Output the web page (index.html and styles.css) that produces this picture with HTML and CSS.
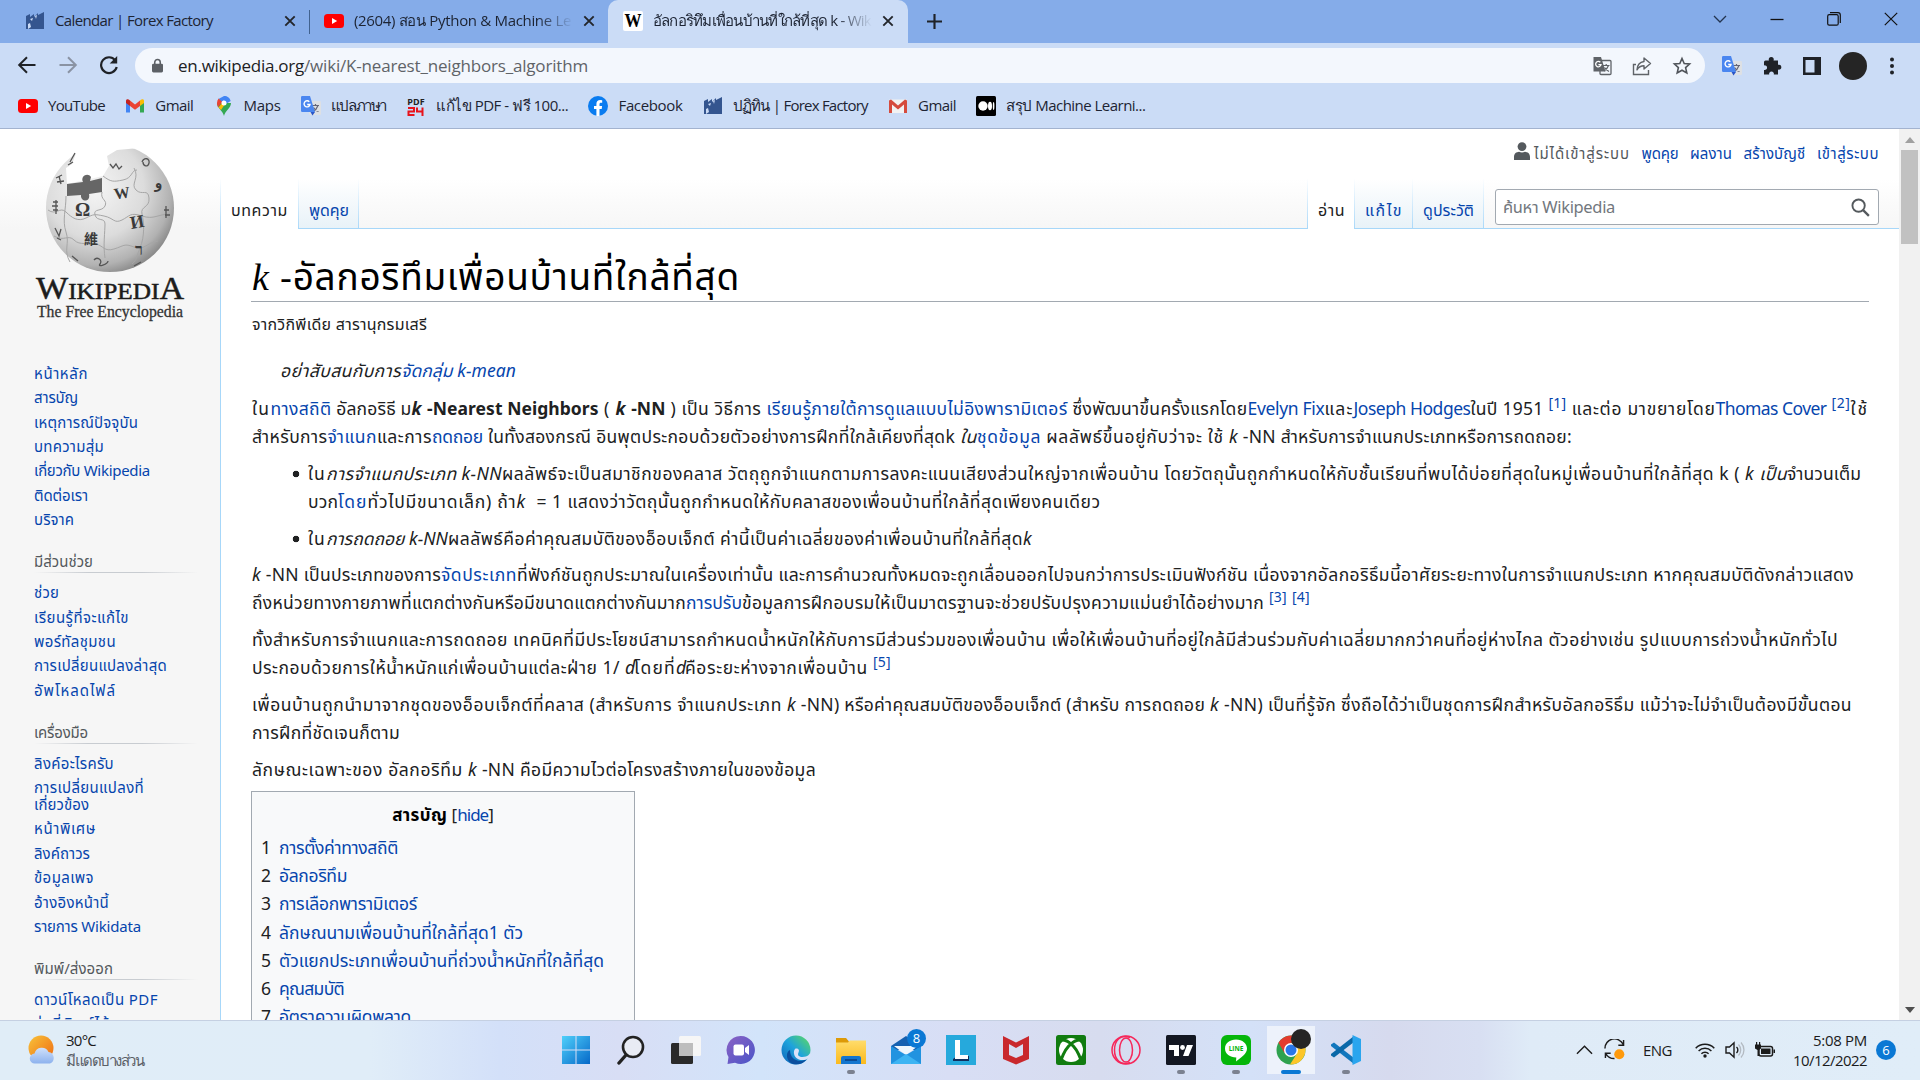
FILE: index.html
```html
<!DOCTYPE html>
<html lang="th">
<head>
<meta charset="utf-8">
<title>อัลกอริทึมเพื่อนบ้านที่ใกล้ที่สุด k - Wikipedia</title>
<link rel="stylesheet" href="styles.css">
</head>
<body>
<svg class="defs" aria-hidden="true">
  <defs>
    <linearGradient id="gWin" x1="0" y1="0" x2="1" y2="1"><stop offset="0" stop-color="#4fd0fb"/><stop offset="1" stop-color="#0668c8"/></linearGradient>
    <linearGradient id="gChat" x1="0" y1="0" x2="1" y2="1"><stop offset="0" stop-color="#8b62c4"/><stop offset="1" stop-color="#4a55c8"/></linearGradient>
    <linearGradient id="gEdge" x1="0" y1="1" x2="1" y2="0"><stop offset="0" stop-color="#0f62b8"/><stop offset=".5" stop-color="#1ea3dc"/><stop offset="1" stop-color="#60dd58"/></linearGradient>
    <linearGradient id="gFold" x1="0" y1="0" x2="0" y2="1"><stop offset="0" stop-color="#ffdc6b"/><stop offset="1" stop-color="#fbb91c"/></linearGradient>
    <linearGradient id="gSun" x1="0" y1="0" x2="1" y2="1"><stop offset="0" stop-color="#f8c33a"/><stop offset="1" stop-color="#ee6a12"/></linearGradient>
    <linearGradient id="gCloud" x1="0" y1="0" x2="0" y2="1"><stop offset="0" stop-color="#cfe0fa"/><stop offset="1" stop-color="#8db2ee"/></linearGradient>
    <radialGradient id="gGlobe" cx=".38" cy=".35" r=".7"><stop offset="0" stop-color="#f5f5f5"/><stop offset=".55" stop-color="#dcdcdc"/><stop offset=".85" stop-color="#b2b2b2"/><stop offset="1" stop-color="#858585"/></radialGradient>
  </defs>
  <symbol id="i-forex" viewBox="0 0 20 20"><path fill="#34558f" d="M1 5l4-2v3l4-3v3l4-4v2l6-3v17H1z"/><path fill="#cbdbf5" d="M5 8l3-1-1 3zM3 13l2-1 1 4-3 2zM10 5l2-1-1 4z"/></symbol>
  <symbol id="i-yt" viewBox="0 0 20 20"><rect x="0" y="3" width="20" height="14" rx="3.5" fill="#f00"/><path fill="#fff" d="M8 7l5.200 3L8 13z"/></symbol>
  <symbol id="i-gmail" viewBox="0 0 20 20"><path fill="#4285f4" d="M1 5v11.500h4V8z"/><path fill="#34a853" d="M15 8v8.500h4V5z"/><path fill="#ea4335" d="M5 4.500l5 4 5-4V10l-5 3.800L5 10z"/><path fill="#c5221f" d="M1 5c0-2 2-2.500 4-.5V10L1 7z"/><path fill="#fbbc04" d="M19 5c0-2-2-2.500-4-.5V10l4-3z"/></symbol>
  <symbol id="i-gmailold" viewBox="0 0 20 20"><rect x="1" y="3.500" width="18" height="13.500" rx="1" fill="#f2f2f2"/><path fill="#d54b3d" d="M1 4.500l2-1 7 6 7-6 2 1V17h-3V8.500l-6 5-6-5V17H1z"/></symbol>
  <symbol id="i-maps" viewBox="0 0 20 20"><path fill="#34a853" d="M10 20C9 15 3 12 3 7h14c0 5-6 8-7 13z"/><path fill="#4285f4" d="M10 0a7 7 0 0 1 6.700 5L10 9z"/><path fill="#fbbc04" d="M4.500 11.500L8 7l3 1-4 6z"/><path fill="#4285f4" d="M10 0a7 7 0 0 1 2.500.5L8 7 4.500 3z"/><path fill="#ea4335" d="M4.600 2.600L8.300 6 4 11.200C2.600 8.500 2.600 5 4.600 2.600z"/><circle cx="10" cy="7" r="2.500" fill="#fff"/></symbol>
  <symbol id="i-gt" viewBox="0 0 20 20"><rect x="8" y="5" width="12" height="14" rx="1.200" fill="#dde0e4"/><path d="M11 9.500h7M14.500 8v1.500M17 9.500c-1 3-3 5-5 6M12.500 11.500c1 2 3 3.500 5 4" stroke="#667" stroke-width="1.200" fill="none"/><path fill="#4a86f0" d="M1.200 0H9l5 16H1.200A1.200 1.200 0 0 1 0 14.800V1.200A1.200 1.200 0 0 1 1.200 0z"/><path fill="#2a56c8" d="M9.500 16H14l-2.500 3.500z"/><path d="M8.300 5.800A3 3 0 1 0 9 8.500H6.200" stroke="#fff" stroke-width="1.400" fill="none"/></symbol>
  <symbol id="i-gtgray" viewBox="0 0 20 20"><rect x="8" y="4.500" width="11" height="14" rx="1" fill="none" stroke="#5f6368" stroke-width="1.300"/><path d="M11 9.500h6.500M14.200 8v1.500M16.500 9.500c-1 3-2.500 4-4.500 5.500M12.500 11.500c1 2 2.500 3 4.500 4" stroke="#5f6368" stroke-width="1.200" fill="none"/><path fill="#5f6368" d="M1.500 1H9l4.500 14.500h-12z"/><path d="M8.300 6.200A2.700 2.700 0 1 0 9 8.700H6.400" stroke="#fff" stroke-width="1.300" fill="none"/></symbol>
  <symbol id="i-fb" viewBox="0 0 20 20"><circle cx="10" cy="10" r="10" fill="#0a7cf0"/><path fill="#fff" d="M8.400 20v-7H6v-3h2.400V8c0-2.600 1.500-4 3.800-4l2 .2v2.500h-1.200c-1.200 0-1.500.7-1.500 1.500V10h2.600l-.4 3h-2.200v7z"/></symbol>
  <symbol id="i-medium" viewBox="0 0 20 20"><rect width="20" height="20" rx="1.500"/><circle cx="7" cy="10" r="4.700" fill="#fff"/><ellipse cx="14" cy="10" rx="2" ry="4.300" fill="#fff"/><ellipse cx="17.600" cy="10" rx=".8" ry="4" fill="#fff"/></symbol>
  <symbol id="i-x" viewBox="0 0 12 12"><path d="M1.300 1.300l9.400 9.400M10.700 1.300L1.300 10.700" stroke="#23262b" stroke-width="1.900" fill="none"/></symbol>
</svg>

<div class="browser">
  <header class="tabstrip">
    <div class="tab t1"><svg class="fav"><use href="#i-forex"/></svg><div class="tabtext"><span data-w="158">Calendar | Forex Factory</span></div><svg class="close"><use href="#i-x"/></svg></div>
    <div class="tab t2"><svg class="fav"><use href="#i-yt"/></svg><div class="tabtext fade"><span data-w="217">(2604) สอน Python &amp; Machine Le</span></div><svg class="close"><use href="#i-x"/></svg></div>
    <div class="tab t3"><svg class="fav" viewBox="0 0 20 20"><rect width="20" height="20" rx="2" fill="#fff"/><text x="10" y="16" text-anchor="middle" textLength="17" lengthAdjust="spacingAndGlyphs" class="wglyph">W</text></svg><div class="tabtext fade"><span data-w="218">อัลกอริทึมเพื่อนบ้านที่ใกล้ที่สุด k - Wik</span></div><svg class="close"><use href="#i-x"/></svg></div>
    <svg class="plus" viewBox="0 0 14 14"><path d="M7 0v14M0 7h14" stroke="#1e2228" stroke-width="2"/></svg>
    <div class="winctl">
      <svg viewBox="0 0 14 14"><path d="M1 4l6 6 6-6" stroke="#23344f" fill="none" stroke-width="1.300"/></svg>
      <svg viewBox="0 0 14 14"><path d="M.5 7.500h13" stroke="#111" stroke-width="1.300"/></svg>
      <svg viewBox="0 0 14 14"><rect x=".7" y="2.700" width="10.500" height="10.500" rx="1.500" fill="none" stroke="#111" stroke-width="1.200"/><path d="M3 .7h8a2.300 2.300 0 0 1 2.300 2.300v8" fill="none" stroke="#111" stroke-width="1.200"/></svg>
      <svg viewBox="0 0 14 14"><path d="M.8.800l12.400 12.400M13.200.8L.8 13.200" stroke="#111" stroke-width="1.200"/></svg>
    </div>
  </header>

  <div class="toolbar">
    <div class="nav">
      <svg viewBox="0 0 20 20"><path d="M18.500 10H2.500M10 2.200L2.200 10l7.800 7.800" stroke="#1f2227" stroke-width="2" fill="none"/></svg>
      <svg viewBox="0 0 20 20"><path d="M1.500 10h16M10 2.200l7.800 7.800-7.800 7.800" stroke="#8a93a3" stroke-width="2" fill="none"/></svg>
      <svg viewBox="0 0 20 20"><path d="M16.200 5.200A7.900 7.900 0 1 0 17.700 12" stroke="#1f2227" stroke-width="2.200" fill="none"/><path d="M18.200 1v7.500h-7.500z" fill="#1f2227"/></svg>
    </div>
    <div class="omnibox">
      <svg class="lock" viewBox="0 0 12 16"><path d="M3 7V4.500a3 3 0 0 1 6 0V7" stroke="#5c6066" stroke-width="1.700" fill="none"/><rect y="6" width="12" height="9.500" rx="1.500" fill="#5c6066"/></svg>
      <div class="url"><span data-w="126" class="host">en.wikipedia.org</span><span data-w="284">/wiki/K-nearest_neighbors_algorithm</span></div>
      <div class="omniicons">
        <svg><use href="#i-gtgray"/></svg>
        <svg viewBox="0 0 20 20"><path d="M4 8.500H1.500v10h15V14" stroke="#5f6368" stroke-width="1.400" fill="none"/><path d="M12 2l6.500 5.500L12 13v-3.200c-3.500 0-5.500 1.500-7 4 .3-4.500 3-7.800 7-8.300z" stroke="#5f6368" stroke-width="1.400" fill="none" stroke-linejoin="round"/></svg>
        <svg viewBox="0 0 20 20"><path d="M10 2.500l2.200 5 5.400.5-4 3.600 1.200 5.400L10 14.200 5.200 17l1.200-5.400-4-3.600 5.400-.5z" stroke="#50545a" stroke-width="1.600" fill="none"/></svg>
      </div>
    </div>
    <div class="ext">
      <svg><use href="#i-gt"/></svg>
      <svg viewBox="0 0 20 20"><path fill="#1f2227" d="M3.500 4.500H7a2.500 2.500 0 1 1 4.500 0H16v4.300a2.500 2.500 0 1 1 0 4.700V18.500h-4.200a2.400 2.400 0 1 0-4.600 0H2V14a2.400 2.400 0 1 0 0-4.600V6a1.500 1.500 0 0 1 1.500-1.500z"/></svg>
      <svg viewBox="0 0 20 20"><path fill="#1f2227" fill-rule="evenodd" d="M1 1h18v18H1zM3.500 4v12.500h9V4z"/></svg>
      <div class="avatar"></div>
      <svg viewBox="0 0 20 20"><g fill="#1f2227"><circle cx="10" cy="3.500" r="2"/><circle cx="10" cy="10" r="2"/><circle cx="10" cy="16.500" r="2"/></g></svg>
    </div>
  </div>

  <nav class="bookmarks">
    <div class="bm"><svg><use href="#i-yt"/></svg><span data-w="57">YouTube</span></div>
    <div class="bm"><svg><use href="#i-gmail"/></svg><span data-w="38">Gmail</span></div>
    <div class="bm"><svg><use href="#i-maps"/></svg><span data-w="37">Maps</span></div>
    <div class="bm"><svg><use href="#i-gt"/></svg><span data-w="55">แปลภาษา</span></div>
    <div class="bm"><svg viewBox="0 0 20 20"><text x="10" y="9" text-anchor="middle" class="pdf">PDF</text><path d="M2 12h6v3.500H2.500V19H8.500M11 11.500v4h6M16.500 11.500V20" stroke="#e8131b" stroke-width="2" fill="none"/></svg><span data-w="132">แก้ไข PDF - ฟรี 100...</span></div>
    <div class="bm"><svg><use href="#i-fb"/></svg><span data-w="64">Facebook</span></div>
    <div class="bm"><svg><use href="#i-forex"/></svg><span data-w="135">ปฏิทิน | Forex Factory</span></div>
    <div class="bm"><svg><use href="#i-gmailold"/></svg><span data-w="38">Gmail</span></div>
    <div class="bm"><svg><use href="#i-medium"/></svg><span data-w="139">สรุป Machine Learni...</span></div>
  </nav>
</div>

<div class="page">
  <aside class="sidebar">
    <svg class="logo" viewBox="0 0 160 180">
      <defs><clipPath id="cg"><path d="M0 0h48L42 16l-6 4 1 16 36-8 6-10-2-10 10-6 22-2 6-4h20l30 20v130H0z"/></clipPath></defs>
      <g clip-path="url(#cg)"><circle cx="80" cy="60" r="64" fill="url(#gGlobe)"/></g>
      <path fill="#666" d="M37 36l16-2c-3-6 5-10 8-5l-1 4 12-3v14l-13 2c2 9-9 8-8 1l-14 1z"/>
      <g fill="none" stroke="#a6a6a6" stroke-width="1">
        <path d="M36 48c0 14-4 24 0 36s-3 18 4 30M72 44c-2 8 6 8 3 14s-12 2-10 9 10 2 10 9-2 22 0 34M104 20c6 10-4 16 2 22s12-2 13 8-9 8-7 16 3 22-2 34-2 10-8 16M18 62c8 6 12-4 18 2s12 10 20 6 8-4 18-2 10 8 18 4 8-8 20-4 16-2 28-2M24 88c10 6 14-2 20 4s14 2 22 4 8 8 18 5 10-6 20-2 12-4 24-6M73 28c8 6 10 6 20 4s8-10 14-10"/>
      </g>
      <g class="gl">
        <text x="45" y="68" font-size="19">Ω</text><text x="84" y="51" font-size="16" transform="rotate(-8 88 46)">W</text>
        <text x="100" y="80" font-size="18" transform="rotate(-10 106 74)">И</text><text x="54" y="96" font-size="14">維</text>
        <text x="105" y="107" font-size="16">ר</text><text x="125" y="40" font-size="15">و</text>
      </g>
      <g fill="none" stroke="#555" stroke-width="1.300">
        <path d="M80 16l3 4 3-4 3 5 3-3M112 14c2-5 8-4 7 1s-6 3-6-1M26 30l6-3M27 34l7-1M29 28l2 8M23 54h5M22 58h6M23 62h5M26 52v14M25 80l4 8 2-7M27 90l4 2M42 108l6 5M64 112c3-4 9 0 6 4s8 0 8-3M104 118l7-4M136 58v12M134 62h5M135 67h5M40 14l5-9M38 17l5-3"/>
      </g>
      <text x="6" y="151" class="wm" textLength="148" lengthAdjust="spacingAndGlyphs"><tspan font-size="31">W</tspan><tspan font-size="23">IKIPEDI</tspan><tspan font-size="31">A</tspan></text>
      <text x="7" y="169" class="tag" textLength="146" lengthAdjust="spacingAndGlyphs">The Free Encyclopedia</text>
    </svg>
    <ul>
      <li><a data-w="54">หน้าหลัก</a></li><li><a data-w="44">สารบัญ</a></li><li><a data-w="104">เหตุการณ์ปัจจุบัน</a></li><li><a data-w="70">บทความสุ่ม</a></li><li><a data-w="116">เกี่ยวกับ Wikipedia</a></li><li><a data-w="54">ติดต่อเรา</a></li><li><a data-w="40">บริจาค</a></li>
    </ul>
    <h3><span data-w="59">มีส่วนช่วย</span></h3>
    <ul>
      <li><a data-w="25">ช่วย</a></li><li><a data-w="95">เรียนรู้ที่จะแก้ไข</a></li><li><a data-w="82">พอร์ทัลชุมชน</a></li><li><a data-w="133">การเปลี่ยนแปลงล่าสุด</a></li><li><a data-w="82">อัพโหลดไฟล์</a></li>
    </ul>
    <h3><span data-w="54">เครื่องมือ</span></h3>
    <ul>
      <li><a data-w="80">ลิงค์อะไรครับ</a></li><li><a data-w="110">การเปลี่ยนแปลงที่</a><br><a data-w="55">เกี่ยวข้อง</a></li><li><a data-w="62">หน้าพิเศษ</a></li><li><a data-w="56">ลิงค์ถาวร</a></li><li><a data-w="60">ข้อมูลเพจ</a></li><li><a data-w="75">อ้างอิงหน้านี้</a></li><li><a data-w="107">รายการ Wikidata</a></li>
    </ul>
    <h3><span data-w="79">พิมพ์/ส่งออก</span></h3>
    <ul>
      <li><a data-w="124">ดาวน์โหลดเป็น PDF</a></li><li><a data-w="76">รุ่นที่พิมพ์ได้</a></li>
    </ul>
  </aside>

  <div class="main">
    <div class="personal">
      <svg viewBox="0 0 16 18"><circle cx="8" cy="4.600" r="4.400" fill="#54595d"/><path d="M0 18v-3c0-3.500 2.500-5 5-5.200 2 1 4 1 6 0 2.500.2 5 1.700 5 5.200v3z" fill="#54595d"/></svg>
      <span class="anon" data-w="96">ไม่ได้เข้าสู่ระบบ</span><a data-w="37">พูดคุย</a><a data-w="42">ผลงาน</a><a data-w="62">สร้างบัญชี</a><a data-w="62">เข้าสู่ระบบ</a>
    </div>
    <div class="tabs">
      <div class="vt on first"><span data-w="57">บทความ</span></div><div class="vt"><a data-w="40">พูดคุย</a></div>
      <div class="sp"></div>
      <div class="vt on read"><span data-w="27">อ่าน</span></div><div class="vt"><a data-w="38">แก้ไข</a></div><div class="vt"><a data-w="51">ดูประวัติ</a></div>
      <div class="searchwrap"><div class="search"><span data-w="112">ค้นหา Wikipedia</span><svg viewBox="0 0 20 20"><circle cx="8" cy="8" r="6.500" fill="none" stroke="#54595d" stroke-width="2"/><path d="M12.800 12.800l6 6" stroke="#54595d" stroke-width="2.400"/></svg></div></div>
    </div>
    <article class="content">
      <h1><i data-w="28">k </i><span data-w="460">-อัลกอริทึมเพื่อนบ้านที่ใกล้ที่สุด</span></h1>
      <div class="sub"><span data-w="175">จากวิกิพีเดีย สารานุกรมเสรี</span></div>
      <div class="p hat"><i data-w="121">อย่าสับสนกับการ</i><a data-w="115"><i>จัดกลุ่ม k-mean</i></a></div>
      <div class="p">
        <div class="ln"><span data-w="18.500">ใน</span><a data-w="61">ทางสถิติ</a><span data-w="80"> อัลกอริธี ม</span><b data-w="11"><i>k</i></b><b data-w="176"> -Nearest Neighbors</b><span data-w="17"> ( </span><b data-w="11"><i>k</i></b><b data-w="39"> -NN</b><span data-w="101"> ) เป็น วิธีการ </span><a data-w="301">เรียนรู้ภายใต้การดูแลแบบไม่อิงพารามิเตอร์</a><span data-w="180"> ซึ่งพัฒนาขึ้นครั้งแรกโดย</span><a data-w="77">Evelyn Fix</a><span data-w="29">และ</span><a data-w="117">Joseph Hodges</a><span data-w="78">ในปี 1951 </span><sup><a data-w="18">[1]</a></sup><span data-w="149"> และต่อ มาขยายโดย</span><a data-w="111">Thomas Cover</a><span data-w="5"> </span><sup><a data-w="19">[2]</a></sup><span data-w="19">ใช้</span></div>
        <div class="ln"><span data-w="75.500">สำหรับการ</span><a data-w="49.500">จำแนก</a><span data-w="55">และการ</span><a data-w="51">ถดถอย</a><span data-w="477"> ในทั้งสองกรณี อินพุตประกอบด้วยตัวอย่างการฝึกที่ใกล้เคียงที่สุดk </span><i data-w="17">ใน</i><a data-w="64">ชุดข้อมูล</a><span data-w="188"> ผลลัพธ์ขึ้นอยู่กับว่าจะ ใช้ </span><i data-w="9">k</i><span data-w="334"> -NN สำหรับการจำแนกประเภทหรือการถดถอย:</span></div>
      </div>
      <div class="p bl">
        <div class="ln"><span data-w="18">ใน</span><i data-w="176">การจำแนกประเภท k-NN</i><span data-w="1243">ผลลัพธ์จะเป็นสมาชิกของคลาส วัตถุถูกจำแนกตามการลงคะแนนเสียงส่วนใหญ่จากเพื่อนบ้าน โดยวัตถุนั้นถูกกำหนดให้กับชั้นเรียนที่พบได้บ่อยที่สุดในหมู่เพื่อนบ้านที่ใกล้ที่สุด k ( </span><i data-w="42">k เป็น</i><span data-w="74">จำนวนเต็ม</span></div>
        <div class="ln"><span data-w="30">บวก</span><a data-w="29.500">โดย</a><span data-w="149">ทั่วไปมีขนาดเล็ก) ถ้า</span><i data-w="10">k</i><span data-w="574">  = 1 แสดงว่าวัตถุนั้นถูกกำหนดให้กับคลาสของเพื่อนบ้านที่ใกล้ที่สุดเพียงคนเดียว</span></div>
      </div>
      <div class="p bl">
        <div class="ln"><span data-w="18">ใน</span><i data-w="122">การถดถอย k-NN</i><span data-w="575">ผลลัพธ์คือค่าคุณสมบัติของอ็อบเจ็กต์ ค่านี้เป็นค่าเฉลี่ยของค่าเพื่อนบ้านที่ใกล้ที่สุด</span><i data-w="10">k</i></div>
      </div>
      <div class="p">
        <div class="ln"><i data-w="9">k</i><span data-w="180"> -NN เป็นประเภทของการ</span><a data-w="76">จัดประเภท</a><span data-w="1337">ที่ฟังก์ชันถูกประมาณในเครื่องเท่านั้น และการคำนวณทั้งหมดจะถูกเลื่อนออกไปจนกว่าการประเมินฟังก์ชัน เนื่องจากอัลกอริธึมนี้อาศัยระยะทางในการจำแนกประเภท หากคุณสมบัติดังกล่าวแสดง</span></div>
        <div class="ln"><span data-w="434">ถึงหน่วยทางกายภาพที่แตกต่างกันหรือมีขนาดแตกต่างกันมาก</span><a data-w="56">การปรับ</a><span data-w="527">ข้อมูลการฝึกอบรมให้เป็นมาตรฐานจะช่วยปรับปรุงความแม่นยำได้อย่างมาก </span><sup><a data-w="18">[3]</a><span data-w="5"> </span><a data-w="18">[4]</a></sup></div>
      </div>
      <div class="p">
        <div class="ln"><span data-w="1586">ทั้งสำหรับการจำแนกและการถดถอย เทคนิคที่มีประโยชน์สามารถกำหนดน้ำหนักให้กับการมีส่วนร่วมของเพื่อนบ้าน เพื่อให้เพื่อนบ้านที่อยู่ใกล้มีส่วนร่วมกับค่าเฉลี่ยมากกว่าคนที่อยู่ห่างไกล ตัวอย่างเช่น รูปแบบการถ่วงน้ำหนักทั่วไป</span></div>
        <div class="ln"><span data-w="373">ประกอบด้วยการให้น้ำหนักแก่เพื่อนบ้านแต่ละฝ่าย 1/ </span><i data-w="9">d</i><span data-w="42">โดยที่</span><i data-w="9">d</i><span data-w="188">คือระยะห่างจากเพื่อนบ้าน </span><sup><a data-w="18">[5]</a></sup></div>
      </div>
      <div class="p">
        <div class="ln"><span data-w="535">เพื่อนบ้านถูกนำมาจากชุดของอ็อบเจ็กต์ที่คลาส (สำหรับการ จำแนกประเภท </span><i data-w="9">k</i><span data-w="414"> -NN) หรือค่าคุณสมบัติของอ็อบเจ็กต์ (สำหรับ การถดถอย </span><i data-w="9">k</i><span data-w="633"> -NN) เป็นที่รู้จัก ซึ่งถือได้ว่าเป็นชุดการฝึกสำหรับอัลกอริธึม แม้ว่าจะไม่จำเป็นต้องมีขั้นตอน</span></div>
        <div class="ln"><span data-w="148">การฝึกที่ชัดเจนก็ตาม</span></div>
      </div>
      <div class="p">
        <div class="ln"><span data-w="216">ลักษณะเฉพาะของ อัลกอริทึม </span><i data-w="9">k</i><span data-w="339"> -NN คือมีความไวต่อโครงสร้างภายในของข้อมูล</span></div>
      </div>
      <div class="toc">
        <div class="toctitle"><b data-w="55">สารบัญ</b> <span>[<a data-w="31">hide</a>]</span></div>
        <div class="ti">1<a data-w="119">การตั้งค่าทางสถิติ</a></div>
        <div class="ti">2<a data-w="68">อัลกอริทึม</a></div>
        <div class="ti">3<a data-w="138">การเลือกพารามิเตอร์</a></div>
        <div class="ti">4<a data-w="244">ลักษณนามเพื่อนบ้านที่ใกล้ที่สุด1 ตัว</a></div>
        <div class="ti">5<a data-w="325">ตัวแยกประเภทเพื่อนบ้านที่ถ่วงน้ำหนักที่ใกล้ที่สุด</a></div>
        <div class="ti">6<a data-w="65">คุณสมบัติ</a></div>
        <div class="ti">7<a data-w="132">อัตราความผิดพลาด</a></div>
      </div>
    </article>
  </div>
  <div class="scroll"><i class="up"></i><i class="thumb"></i><i class="down"></i></div>
</div>

<footer class="taskbar">
  <div class="weather">
    <svg viewBox="0 0 30 30"><circle cx="14" cy="13" r="12.500" fill="url(#gSun)"/><path fill="url(#gCloud)" d="M8 28.500a5 5 0 0 1-.5-10 7.500 7.500 0 0 1 14-1.500 6 6 0 0 1 1.500 11.500z"/></svg>
    <div><div class="t"><span data-w="30">30°C</span></div><div class="d"><span data-w="77">มีแดดบางส่วน</span></div></div>
  </div>
  <div class="apps">
    <div class="app"><svg viewBox="0 0 30 30"><path fill="url(#gWin)" d="M1 1h13.500v13.500H1zM15.500 1H29v13.500H15.500zM1 15.500h13.500V29H1zM15.500 15.500H29V29H15.500z"/></svg></div>
    <div class="app"><svg viewBox="0 0 30 30"><circle cx="17" cy="12" r="10" fill="#e8ebf4" stroke="#222" stroke-width="2.600"/><path d="M10 20l-7 8" stroke="#222" stroke-width="3.400" stroke-linecap="round"/></svg></div>
    <div class="app"><svg viewBox="0 0 30 30"><rect x="0" y="8" width="22" height="21" rx="1.500" fill="#2a2a2a"/><rect x="8" y="1" width="22" height="20" rx="1.500" fill="#f6f6f6"/><rect x="8" y="8" width="14" height="13" fill="#bdbdbd"/></svg></div>
    <div class="app"><svg viewBox="0 0 30 30"><path fill="url(#gChat)" d="M15 1a14 14 0 1 1-6 26.700L1.500 29l1-7A14 14 0 0 1 15 1z"/><rect x="7.500" y="9.500" width="10.500" height="11" rx="2" fill="#fff"/><path fill="#fff" d="M19 13l4-3v10l-4-3z"/></svg></div>
    <div class="app"><svg viewBox="0 0 30 30"><circle cx="15" cy="15" r="14.500" fill="url(#gEdge)"/><path fill="#0c4f9e" d="M9 15c0 8 6 12 13 10.500 2-.5 3-1 4.500-2A14.500 14.500 0 0 1 12 29C4 26 5 16 9 15z"/><path fill="#d9e2f8" d="M15 13.500c3 0 3.500 2 2.500 4-1.500 3 1 4.500 4 4.500 5 0 8-3 8-6v6l-4 2.500c-8 2-12-2-12.500-6-.3-2.500.7-5 2-5z"/></svg></div>
    <div class="app run"><svg viewBox="0 0 30 30"><path fill="#dd9a07" d="M0 3h10l3 3.500V10H0z"/><path fill="url(#gFold)" d="M0 7.500h12l2-2h16V29H0z"/><path fill="#1476cf" d="M5 29v-6a2 2 0 0 1 2-2h16a2 2 0 0 1 2 2v6z"/><path stroke="#0a3f80" stroke-width="1.500" d="M9 25h12"/></svg></div>
    <div class="app"><svg viewBox="0 0 30 30"><path fill="#1560b0" d="M0 11L15 1l15 10v4H0z"/><path fill="#eef6fd" d="M3 11h24l-12 9z"/><path fill="#2193e0" d="M0 11l15 9 15-9v18H0z"/><path fill="#3db4f3" d="M0 29l15-10 15 10z"/></svg><b class="badge">8</b></div>
    <div class="app"><svg viewBox="0 0 30 30"><rect width="30" height="30" fill="#26a9dc"/><path fill="#11305e" d="M7 26V24l4-3h12v5z"/><path fill="#fff" d="M9 5h5v15h8v4H9z"/></svg></div>
    <div class="app"><svg viewBox="0 0 30 30"><path fill="#c9282d" d="M2 1l13 6.500L28 1v23l-13 5.500L2 24z"/><path fill="#d7ddf3" d="M8 9l7 4 7-4v11l-7 3-7-3z"/></svg></div>
    <div class="app"><svg viewBox="0 0 30 30"><rect width="30" height="30" rx="2.500" fill="#117c10"/><circle cx="15" cy="15" r="12" fill="#fff"/><path d="M5 25C8 17 12 11 15 9c3 2 7 8 10 16M6 5c4 0 7 2 9 4 2-2 5-4 9-4" stroke="#117c10" stroke-width="3" fill="none"/></svg></div>
    <div class="app"><svg viewBox="0 0 30 30"><g fill="none" stroke="#f6275a" stroke-width="1.500"><circle cx="15" cy="15" r="14"/><ellipse cx="15" cy="15" rx="6.500" ry="12"/><path d="M19 2.500C9-1 3.500 6 3.500 15S9 31 19 27.500"/></g></svg></div>
    <div class="app run"><svg viewBox="0 0 30 30"><rect width="30" height="30" rx="1.500" fill="#131722"/><path fill="#fff" d="M3 10h10v11H8v-6H3zM21 10h6l-4.500 11h-5.500z"/><circle cx="16.500" cy="12.500" r="2.400" fill="#fff"/></svg></div>
    <div class="app run"><svg viewBox="0 0 30 30"><rect width="30" height="30" rx="6" fill="#05b60a"/><path fill="#fff" d="M15 4.500c6.500 0 11 4 11 9 0 5.500-6 9-11 13l.3-4C9 22.500 4 19 4 13.500s5-9 11-9z"/><text x="15" y="16" text-anchor="middle" class="line">LINE</text></svg></div>
    <div class="app active"><svg viewBox="0 0 30 30"><circle cx="15" cy="15" r="14.500" fill="#2fa24f"/><path fill="#e33b2e" d="M2.500 7.700A14.500 14.500 0 0 1 27.500 7.700H15L8.500 18z"/><path fill="#fcc629" d="M15 8h12.600A14.500 14.500 0 0 1 14 29.500l7-11z"/><circle cx="15" cy="15" r="7" fill="#fff"/><circle cx="15" cy="15" r="5.500" fill="#2a77e8"/></svg><b class="prof"></b></div>
    <div class="app run"><svg viewBox="0 0 30 30"><path fill="#1277bd" d="M0 9.500l3-2L23 23v6L0 11z"/><path fill="#0a68a8" d="M0 20.500l3 2L23 7V1L0 19z"/><path fill="#2aa5ee" d="M21.500 0L30 4v22l-8.500 4V0z"/></svg></div>
  </div>
  <div class="tray">
    <svg class="chev" viewBox="0 0 18 10"><path d="M1 9l8-8 8 8" fill="none" stroke="#1c1c1c" stroke-width="1.500"/></svg>
    <svg class="sync" viewBox="0 0 22 22"><path d="M1 10A10 10 0 0 1 20 5.500M20.500 1v5.500H15M1.500 20v-5H7M2 15.500a10 10 0 0 0 9 5" fill="none" stroke="#1c1c1c" stroke-width="1.500"/><circle cx="16" cy="16" r="5.300" fill="#ff9a0c"/></svg>
    <span class="eng" data-w="29">ENG</span>
    <svg class="wifi" viewBox="0 0 20 16"><g fill="none" stroke="#1c1c1c" stroke-width="1.500"><path d="M.7 6.200a13 13 0 0 1 18.600 0M3.600 9a9 9 0 0 1 12.800 0M6.400 11.800a5 5 0 0 1 7.200 0"/></g><circle cx="10" cy="14" r="1.700" fill="#1c1c1c"/></svg>
    <svg class="vol" viewBox="0 0 20 18"><path d="M1 6h3.500L9 1.800v14.400L4.500 12H1z" fill="none" stroke="#1c1c1c" stroke-width="1.400"/><path d="M11.500 6a4 4 0 0 1 0 6" fill="none" stroke="#1c1c1c" stroke-width="1.400"/><path d="M13.500 3.500a8 8 0 0 1 0 11M16 1.500a11 11 0 0 1 0 15" fill="none" stroke="#b3bac2" stroke-width="1.300"/></svg>
    <svg class="bat" viewBox="0 0 20 16"><rect x="4" y="4.500" width="13.500" height="9.500" rx="2" fill="none" stroke="#1c1c1c" stroke-width="1.500"/><rect x="6" y="6.500" width="9.500" height="5.500" fill="#1c1c1c"/><path d="M18.500 7.500h1.500v3.500h-1.500zM0 2.500h6v4L4 8v6H2.500V8L0 6.500zM1 0h1.200v3H1zM4 0h1.200v3H4z" fill="#1c1c1c"/></svg>
    <div class="clock"><div><span data-w="54">5:08 PM</span></div><div><span data-w="74">10/12/2022</span></div></div>
    <b class="note">6</b>
  </div>
</footer>
<script src="fit.js"></script>
</body>
</html>
```
FILE: styles.css
```css
* { box-sizing: border-box; }
body { margin: 0; width: 1920px; height: 1080px; overflow: hidden; display: flex; flex-direction: column; background: #fff; color: #202122; font-family: "Noto Sans", "Noto Sans Thai", sans-serif; }
svg { display: block; flex: none; }
.defs { position: absolute; width: 0; height: 0; }
[data-w] { white-space: pre; }
a { color: #0645ad; text-decoration: none; }
ul { list-style: none; margin: 0; padding: 0; }

/* browser chrome */
.browser { flex: none; height: 129px; background: #cbdcf6; border-bottom: 1px solid #a3b3cf; font-family: "Open Sans", "Noto Sans", sans-serif; color: #1d2433; }
.tabstrip { height: 43px; background: #85ace9; display: flex; align-items: center; }
.tab { height: 43px; display: flex; align-items: center; font-size: 15px; gap: 10px; padding-right: 14px; padding-bottom: 1px; }
.t1 { width: 310px; padding-left: 25px; background: linear-gradient(#41628f, #41628f) right center / 1px 24px no-repeat; }
.t2 { width: 298px; padding-left: 14px; padding-right: 13px; }
.t3 { width: 300px; padding-left: 15px; background: #cbdcf6; border-radius: 10px 10px 0 0; }
.tabtext { flex: 1; overflow: hidden; white-space: nowrap; line-height: 30px; padding-bottom: 2px; }
.fade { mask-image: linear-gradient(90deg, #000 84%, transparent 100%); }
.fav { width: 20px; height: 20px; }
.close { width: 12px; height: 12px; }
.wglyph { font: bold 18px "Liberation Serif", serif; }
.plus { width: 15px; height: 15px; margin-left: 19px; }
.winctl { margin-left: auto; display: flex; gap: 43px; padding: 0 22px 5px 0; }
.winctl svg { width: 14px; height: 14px; }
.toolbar { height: 45px; display: flex; align-items: center; padding: 0 17px; }
.nav { display: flex; gap: 21px; width: 118px; padding-bottom: 1px; }
.nav svg { width: 20px; height: 20px; }
.omnibox { width: 1570px; height: 35px; border-radius: 18px; background: #f3f7fd; display: flex; align-items: center; padding: 0 13px 0 17px; }
.lock { width: 11px; height: 15px; }
.url { margin-left: 15px; font-size: 17px; line-height: 34px; color: #5f6368; }
.host { color: #202124; }
.omniicons { margin-left: auto; display: flex; gap: 20px; }
.omniicons svg, .ext svg { width: 20px; height: 20px; }
.ext { display: flex; align-items: center; gap: 20px; margin-left: 17px; }
.ext svg:nth-child(3) { margin-right: -3px; }
.ext .avatar { width: 28px; height: 28px; border-radius: 50%; background: #252525; margin-right: -5px; }
.bookmarks { display: flex; gap: 20.3px; padding-left: 18px; height: 36px; align-items: center; font-size: 15px; }
.bm { display: flex; gap: 10px; align-items: center; line-height: 24px; }
.bm span { padding-bottom: 2px; }
.bm svg { width: 20px; height: 20px; }
.pdf { font: bold 9px "Open Sans", sans-serif; fill: #222; }

/* page */
.page { flex: none; height: 891px; display: flex; overflow: hidden; background: linear-gradient(#fff 50px, #f6f6f6 100px); }
.sidebar { width: 220px; padding: 15px 0 0 34px; font-size: 15px; }
.logo { width: 160px; height: 180px; margin: 4px 0 33px -4px; }
.gl { font-family: "Liberation Serif", "Noto Sans CJK SC", serif; fill: #3a3a3a; font-weight: bold; }
.wm { font-family: "Liberation Serif", serif; fill: #1c1c1c; stroke: #1c1c1c; stroke-width: .5; }
.tag { font: 17px "Liberation Serif", serif; fill: #333; stroke: #333; stroke-width: .3; }
.sidebar li { line-height: 16.9px; padding: 3.75px 0; }
.sidebar h3 { margin: 18.500px 22px 7px 0; height: 23px; line-height: 22px; font-size: 15px; font-weight: normal; color: #54595d; background: linear-gradient(90deg, rgba(200,204,209,0), #c8ccd1 33%, #c8ccd1 66%, rgba(200,204,209,0)) bottom / 100% 1px no-repeat; }
.main { width: 1679px; }
.personal { height: 50px; display: flex; align-items: flex-start; justify-content: flex-end; padding: 13px 20px 0 0; font-size: 15px; line-height: 22px; gap: 11.5px; }
.personal svg { width: 16px; height: 18px; margin-right: -7px; }
.anon { color: #54595d; }
.tabs { height: 50px; display: flex; background: linear-gradient(#a7d7f9, #a7d7f9) bottom / 100% 1px no-repeat; }
.vt { height: 50px; padding: 20px 9px 0 10px; font-size: 16px; line-height: 22px; border: solid; border-image: linear-gradient(#fff, #a7d7f9) 1; border-width: 0 1px 0 0; background: linear-gradient(#fff, #e8f2f8) top / 100% 49px no-repeat; }
.vt.on { background: linear-gradient(#fff, #fff); }
.vt.first { border-width: 0 1px; width: 79px; }
.vt.read { border-width: 0 1px; }
.sp { flex: 1; }
.searchwrap { width: 415px; padding: 10px 20px 0 11px; }
.search { height: 36px; border: 1px solid #a2a9b1; border-radius: 3px; background: #fff; display: flex; align-items: center; justify-content: space-between; padding: 0 8px 0 7px; font-size: 16.500px; color: #72777d; }
.search svg { width: 19px; height: 19px; }
.content { height: 791px; border-left: 1px solid #a7d7f9; background: #fff; padding: 17px 30px 0 30px; font-size: 17.500px; line-height: 28px; }
h1 { margin: 0; height: 56px; font-size: 37px; line-height: 60px; font-weight: normal; color: #000; border-bottom: 1px solid #a2a9b1; white-space: nowrap; padding-left: 1px; }
h1 i { font-family: "Liberation Serif", serif; font-size: 38px; }
.sub { height: 28px; margin-top: 8px; font-size: 16px; padding-left: 1px; }
.p { margin-bottom: 8.75px; padding-left: 1px; }
.hat { margin-top: 18px; margin-bottom: 10px; padding-left: 29px; height: 28px; white-space: nowrap; }
.ln { height: 28px; white-space: nowrap; }
.bl { padding-left: 57px; background: radial-gradient(circle at 45px 15px, #202122 3px, transparent 3.600px); }
sup { font-size: 14px; line-height: 1; vertical-align: 7px; }
.toc { width: 384px; height: 300px; border: 1px solid #a2a9b1; background: #f8f9fa; margin-top: -.3px; padding: 9px; }
.toctitle { text-align: center; height: 32px; font-size: 17px; }
.toctitle b { color: #000; }
.ti { height: 28.200px; display: flex; gap: 8px; }
.scroll { width: 21px; background: #f1f1f1; display: flex; flex-direction: column; align-items: center; }
.up { border: 5px solid transparent; border-top: 0; border-bottom: 6px solid #a0a0a0; margin-top: 8px; }
.thumb { width: 17px; height: 94px; background: #c1c1c1; margin-top: 7px; }
.down { border: 5px solid transparent; border-bottom: 0; border-top: 6px solid #505050; margin-top: auto; margin-bottom: 7px; }

/* taskbar */
.taskbar { flex: none; height: 60px; border-top: 1px solid #c5d0e2; padding-bottom: 2px; display: flex; align-items: center; font-family: "Open Sans", "Noto Sans", sans-serif; background: linear-gradient(90deg, #e0edf7 0, #e0edf8 370px, #d3e0f9 500px, #d8def5 620px, #d2e4fa 760px, #d8def5 950px, #d7dcef 1100px, #d4e1f8 1250px, #d6daee 1390px, #d8dff2 1480px, #dfebf7 1530px, #e0edf8 100%); }
.weather { width: 548px; padding-left: 27px; display: flex; gap: 9px; align-items: center; }
.weather svg { width: 30px; height: 30px; }
.t { font-size: 15px; line-height: 20px; color: #1b1b1b; }
.d { font-size: 15px; line-height: 20px; color: #5b6067; }
.apps { display: flex; }
.app { width: 55px; height: 59px; display: flex; align-items: center; justify-content: center; position: relative; }
.app svg { width: 30px; height: 30px; }
.run::after { content: ""; position: absolute; left: 24px; bottom: 5px; width: 8px; height: 4px; border-radius: 2px; background: #7b8190; }
.active { background: linear-gradient(#edf2fb, #edf2fb) center / 48px 48px no-repeat; }
.active::after { content: ""; position: absolute; left: 18px; bottom: 5px; width: 20px; height: 4px; border-radius: 2px; background: #0a78d4; }
.badge, .note { border-radius: 50%; background: #0a78d4; color: #fff; font-weight: normal; text-align: center; }
.badge { position: absolute; left: 29px; top: 9px; width: 19px; height: 19px; font-size: 13px; line-height: 19px; }
.prof { position: absolute; left: 28px; top: 9px; width: 20px; height: 20px; border-radius: 50%; background: #252525; }
.line { font: bold 6.500px "Open Sans", sans-serif; fill: #05b60a; }
.tray { margin-left: auto; display: flex; align-items: center; padding-right: 24px; color: #1b1b1b; font-size: 15px; }
.chev { width: 17px; height: 10px; margin-right: 11px; }
.sync { width: 21px; height: 21px; margin-right: 18px; }
.eng { margin-right: 23px; }
.wifi { width: 20px; height: 16px; margin-right: 10px; }
.vol { width: 20px; height: 18px; margin-right: 10px; }
.bat { width: 20px; height: 16px; margin-right: 18px; }
.clock { width: 74px; text-align: right; line-height: 20px; white-space: nowrap; }
.note { margin-left: 9px; width: 20px; height: 20px; font-size: 13px; line-height: 20px; }
```
FILE: fit.js
```js
// Spreads the letters of each labelled run so that it takes its nominal width.
document.querySelectorAll('[data-w]').forEach(function (el) {
  var target = parseFloat(el.dataset.w);
  var size = Array.from(new Intl.Segmenter('th', { granularity: 'grapheme' }).segment(el.textContent)).length;
  var range = document.createRange();
  range.selectNodeContents(el);
  var spacing = 0;
  for (var i = 0; i < 3; i++) {
    spacing += (target - range.getBoundingClientRect().width) / size;
    el.style.letterSpacing = spacing + 'px';
  }
});
```
